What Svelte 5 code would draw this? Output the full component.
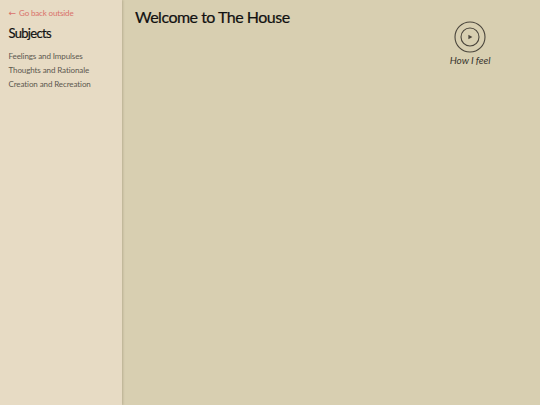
<script>
  let subjects = ["Feelings and Impulses", "Thoughts and Rationale", "Creation and Recreation"];
</script>

<div class="page">
  <aside class="sidebar">
    <a class="back" href="#outside"><span class="arrow">←</span>Go back outside</a>
    <h2>Subjects</h2>
    <ul>
      {#each subjects as subject}
        <li>{subject}</li>
      {/each}
    </ul>
  </aside>
  <main class="main">
    <h1>Welcome to The House</h1>
    <button class="feel">
      <svg width="32" height="32" viewBox="0 0 32 32" fill="none" stroke="#4a453c">
        <circle cx="16" cy="16" r="15" stroke-width="1.1" />
        <circle cx="16" cy="16" r="9" stroke-width="1.1" />
        <path d="M14.4 13.8 L18.4 16 L14.4 18.2 Z" fill="#4a453c" stroke="none" />
      </svg>
      <span>How I feel</span>
    </button>
  </main>
</div>

<style>
  :global(body) {
    margin: 0;
    font-family: Lato, "Open Sans", sans-serif;
  }

  .page {
    display: flex;
    height: 405px;
    background: #d8cfb1;
  }

  .sidebar {
    width: 122px;
    box-sizing: border-box;
    padding: 7px 0 0 8.5px;
    background: #e7dbc4;
    box-shadow: 1px 0 2px rgba(90, 80, 50, 0.25);
  }

  .back {
    display: block;
    font-size: 8px;
    line-height: 12px;
    letter-spacing: -0.15px;
    color: #d9716a;
    text-decoration: none;
  }

  .arrow {
    display: inline-block;
    width: 10.5px;
    font-family: "DejaVu Sans", sans-serif;
    font-size: 9px;
  }

  h2 {
    margin: 4px 0 0;
    font-size: 13px;
    line-height: 20px;
    font-weight: 400;
    letter-spacing: -0.7px;
    color: #111;
    -webkit-text-stroke: 0.2px #111;
  }

  ul {
    list-style: none;
    margin: 6px 0 0;
    padding: 0;
  }

  li {
    font-size: 8px;
    line-height: 14px;
    letter-spacing: -0.1px;
    color: #5c584f;
  }

  .main {
    flex: 1;
    display: flex;
    justify-content: space-between;
    align-items: flex-start;
    padding: 7px 50px 0 13px;
  }

  h1 {
    margin: 0;
    font-size: 16px;
    line-height: 20px;
    font-weight: 400;
    letter-spacing: -0.5px;
    color: #111;
    -webkit-text-stroke: 0.2px #111;
  }

  .feel {
    display: flex;
    flex-direction: column;
    align-items: center;
    gap: 1px;
    margin-top: 14px;
    margin-right: -0.5px;
    padding: 0;
    border: none;
    background: none;
    font: italic 10px/13px Lato, sans-serif;
    letter-spacing: -0.05px;
    color: #3a3630;
  }
</style>
